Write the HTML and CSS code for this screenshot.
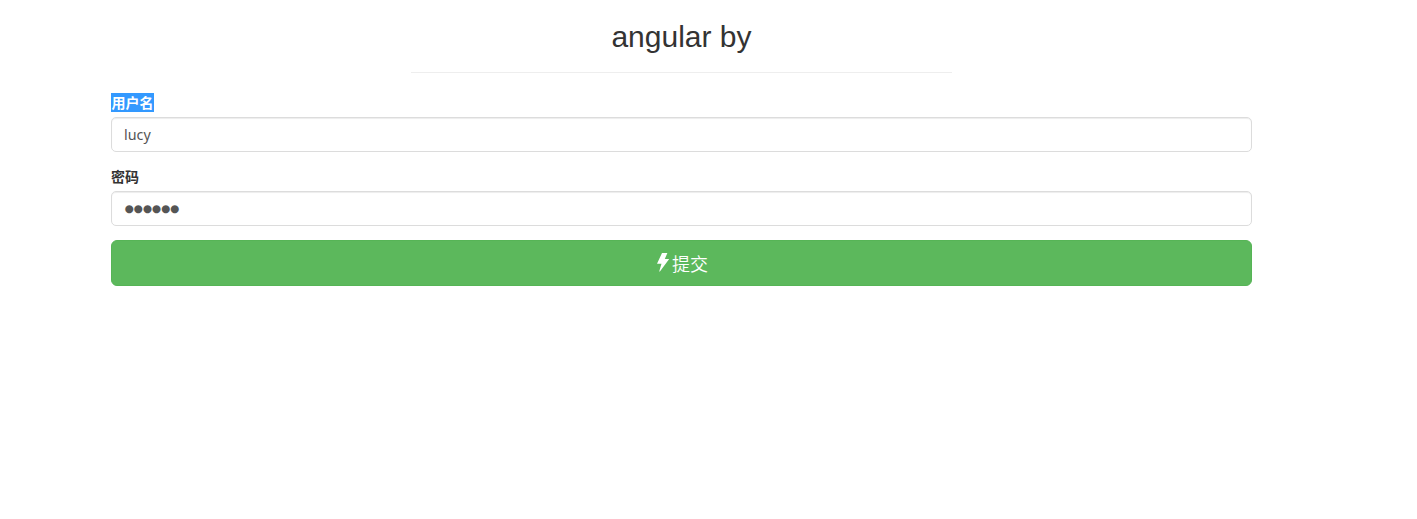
FILE: index.html
```
<!DOCTYPE html>
<html lang="zh">
<head>
<meta charset="utf-8">
<title>angular by</title>
<link rel="stylesheet" href="styles.css">
</head>
<body>
<main class="container">
  <header class="page-header"><h2>angular by</h2></header>
  <form>
    <div class="form-group">
      <label for="user"><span class="selected">用户名</span></label>
      <input class="form-control" id="user" type="text" value="lucy">
    </div>
    <div class="form-group">
      <label for="pass">密码</label>
      <div class="form-control password" id="pass">●●●●●●</div>
    </div>
    <button class="btn" type="button"><svg class="flash" viewBox="0 0 14 20"><path d="M6 1 H11.4 L8.8 7 H13.2 L3.9 19.6 H3.2 L5.5 11.8 H1 Z"/></svg><span>提交</span></button>
  </form>
</main>
</body>
</html>
```
FILE: styles.css
```
* { box-sizing: border-box; }
body {
  margin: 0;
  background: #fff;
  color: #333;
  font: 14px/20px "Liberation Sans", "Noto Sans CJK SC", sans-serif;
}
.container {
  display: flow-root;
  width: 1141px;
  margin-left: 111px;
}
.page-header {
  width: 541px;
  margin: 20px auto 20px;
  padding-bottom: 19px;
  border-bottom: 1px solid #eee;
  text-align: center;
}
h2 {
  margin: 0;
  font-size: 30px;
  font-weight: 400;
  line-height: 33px;
}
.form-group { margin-bottom: 15px; }
label {
  display: block;
  height: 20px;
  margin-bottom: 4px;
  font-weight: 700;
}
.selected {
  display: inline-block;
  height: 19px;
  padding-left: 0.5px;
  background: #39f;
  color: #fff;
}
.form-control {
  display: block;
  width: 100%;
  height: 35px;
  padding: 6px 12px 7px;
  border: 1px solid #dcdcdc;
  border-radius: 5px;
  background: #fff;
  box-shadow: inset 0 1px 1px rgba(0, 0, 0, .075);
  color: #555;
  font: 14.3px/20px "Noto Sans", sans-serif;
}
.password {
  padding: 4px 12px 7px 12.5px;
  font: 10.5px/24px "DejaVu Sans", sans-serif;
  letter-spacing: -0.05px;
}
.btn {
  display: flex;
  align-items: center;
  justify-content: center;
  width: 100%;
  height: 46px;
  margin-top: -1px;
  padding: 0 0 1px 1px;
  border: 1px solid #56b456;
  border-radius: 6px;
  background: #5cb85c;
  color: #fff;
  font: 350 18px/24px "Noto Sans CJK SC", sans-serif;
}
.flash {
  width: 14px;
  height: 20px;
  margin: -1px 2px 0 0;
  fill: #fff;
}
```
